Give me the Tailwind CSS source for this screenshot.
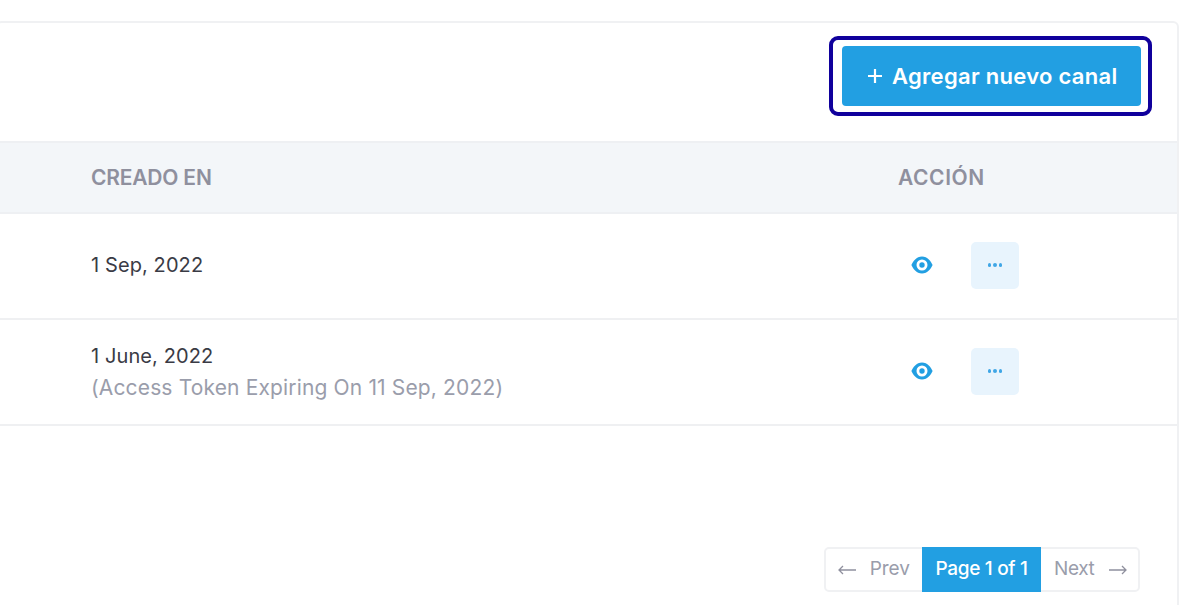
<!DOCTYPE html>
<html lang="en">
    <head>
        <meta charset="UTF-8">
        <meta name="viewport" content="width=device-width, initial-scale=1.0">
        <title>Canales</title>
        <script src="https://cdn.jsdelivr.net/npm/@tailwindcss/browser@4"></script>
    </head>
    <body class="bg-white font-['Inter','Liberation_Sans',sans-serif] h-[605px] overflow-hidden">
        <div class="pt-[21px] h-[605px] overflow-hidden">
            <!--card, runs off the left side of the window-->
            <div class="ml-[-4px] w-[1183px] h-[600px] border-2 border-[#f0f1f3] rounded-md bg-white">
                <div class="flex justify-end pt-[13px] pr-[25px] pb-[25px]">
                    <div class="border-4 border-[#10009c] rounded-[9px] pt-[6px] pb-[6px] pl-[9px] pr-[7px]">
                        <button class="w-[299px] h-[60px] bg-[#229fe2] text-white rounded-[4px] flex items-center pl-[26px] gap-[10px] text-[22px] font-semibold tracking-[0.3px]">
                            <svg class="w-[14px] h-[14px]" viewBox="0 0 14 14"><path d="M7 0v14M0 7h14" stroke="currentColor" stroke-width="2.2" fill="none"/></svg>
                            <span>Agregar nuevo canal</span>
                        </button>
                    </div>
                </div>

                <!--table head-->
                <div class="flex items-center h-[73px] bg-[#f3f6f9] border-y-2 border-[#eef0f3] text-[#8f909e] text-[21px] font-semibold">
                    <div class="pl-[93px] w-[900px] tracking-[-0.2px]">CREADO EN</div>
                    <div class="tracking-[0.6px]">ACCIÓN</div>
                </div>

                <!--rows-->
                <div class="flex items-center h-[106px] border-b-2 border-[#eff0f2]">
                    <div class="pl-[93px] w-[913px] mb-[2px] text-[20px] tracking-[0.1px] text-[#3a3b45]">1 Sep, 2022</div>
                    <svg class="w-[22px] h-[18px] mb-[2px] text-[#229fe2]" viewBox="0 0 22 18"><path fill="currentColor" fill-rule="evenodd" d="M11 .5C5.5.5 1.8 5.5.4 9c1.4 3.5 5.1 8.5 10.6 8.5S20.2 12.5 21.6 9C20.2 5.5 16.5.5 11 .5Zm0 3a5.5 5.5 0 1 1 0 11 5.5 5.5 0 0 1 0-11Zm0 2.8a2.7 2.7 0 1 0 0 5.4 2.7 2.7 0 0 0 0-5.4Z"/></svg>
                    <button class="ml-[38px] mb-[2px] w-[48px] h-[47px] bg-[#e8f4fd] rounded-[5px] flex items-center justify-center gap-[2px]">
                        <span class="w-[3.5px] h-[3.5px] rounded-full bg-[#3fa6e6]"></span>
                        <span class="w-[3.5px] h-[3.5px] rounded-full bg-[#3fa6e6]"></span>
                        <span class="w-[3.5px] h-[3.5px] rounded-full bg-[#3fa6e6]"></span>
                    </button>
                </div>
                <div class="flex items-center h-[106px] border-b-2 border-[#eff0f2]">
                    <div class="pl-[93px] w-[913px] leading-[32px]">
                        <p class="text-[20px] tracking-[0.1px] text-[#3a3b45]">1 June, 2022</p>
                        <p class="text-[21px] tracking-[0.15px] text-[#9a9dab]">(Access Token Expiring On 11 Sep, 2022)</p>
                    </div>
                    <svg class="w-[22px] h-[18px] mb-[2px] text-[#229fe2]" viewBox="0 0 22 18"><path fill="currentColor" fill-rule="evenodd" d="M11 .5C5.5.5 1.8 5.5.4 9c1.4 3.5 5.1 8.5 10.6 8.5S20.2 12.5 21.6 9C20.2 5.5 16.5.5 11 .5Zm0 3a5.5 5.5 0 1 1 0 11 5.5 5.5 0 0 1 0-11Zm0 2.8a2.7 2.7 0 1 0 0 5.4 2.7 2.7 0 0 0 0-5.4Z"/></svg>
                    <button class="ml-[38px] mb-[2px] w-[48px] h-[47px] bg-[#e8f4fd] rounded-[5px] flex items-center justify-center gap-[2px]">
                        <span class="w-[3.5px] h-[3.5px] rounded-full bg-[#3fa6e6]"></span>
                        <span class="w-[3.5px] h-[3.5px] rounded-full bg-[#3fa6e6]"></span>
                        <span class="w-[3.5px] h-[3.5px] rounded-full bg-[#3fa6e6]"></span>
                    </button>
                </div>

                <!--pagination-->
                <div class="flex justify-end pt-[121px] pr-[37px]">
                    <div class="flex items-center h-[45px] border-2 border-[#f0f1f3] rounded-[5px] text-[19px] text-[#9a9dab]">
                        <div class="w-[96px] pl-[12px] pr-[12px] flex items-center justify-between">
                            <svg class="w-[18px] h-[10px] text-[#8f909e]" viewBox="0 0 18 10"><path d="M18 5H1M5 1 1 5l4 4" stroke="currentColor" stroke-width="1.3" fill="none"/></svg>
                            <span>Prev</span>
                        </div>
                        <div class="w-[119px] h-[45px] bg-[#229fe2] text-white flex items-center justify-center font-medium tracking-[-0.3px]">Page 1 of 1</div>
                        <div class="w-[97px] pl-[13px] pr-[11px] flex items-center justify-between">
                            <span class="tracking-[-0.4px]">Next</span>
                            <svg class="w-[18px] h-[10px] text-[#8f909e]" viewBox="0 0 18 10"><path d="M0 5h17M13 1l4 4-4 4" stroke="currentColor" stroke-width="1.3" fill="none"/></svg>
                        </div>
                    </div>
                </div>
            </div>
        </div>
    </body>
</html>
